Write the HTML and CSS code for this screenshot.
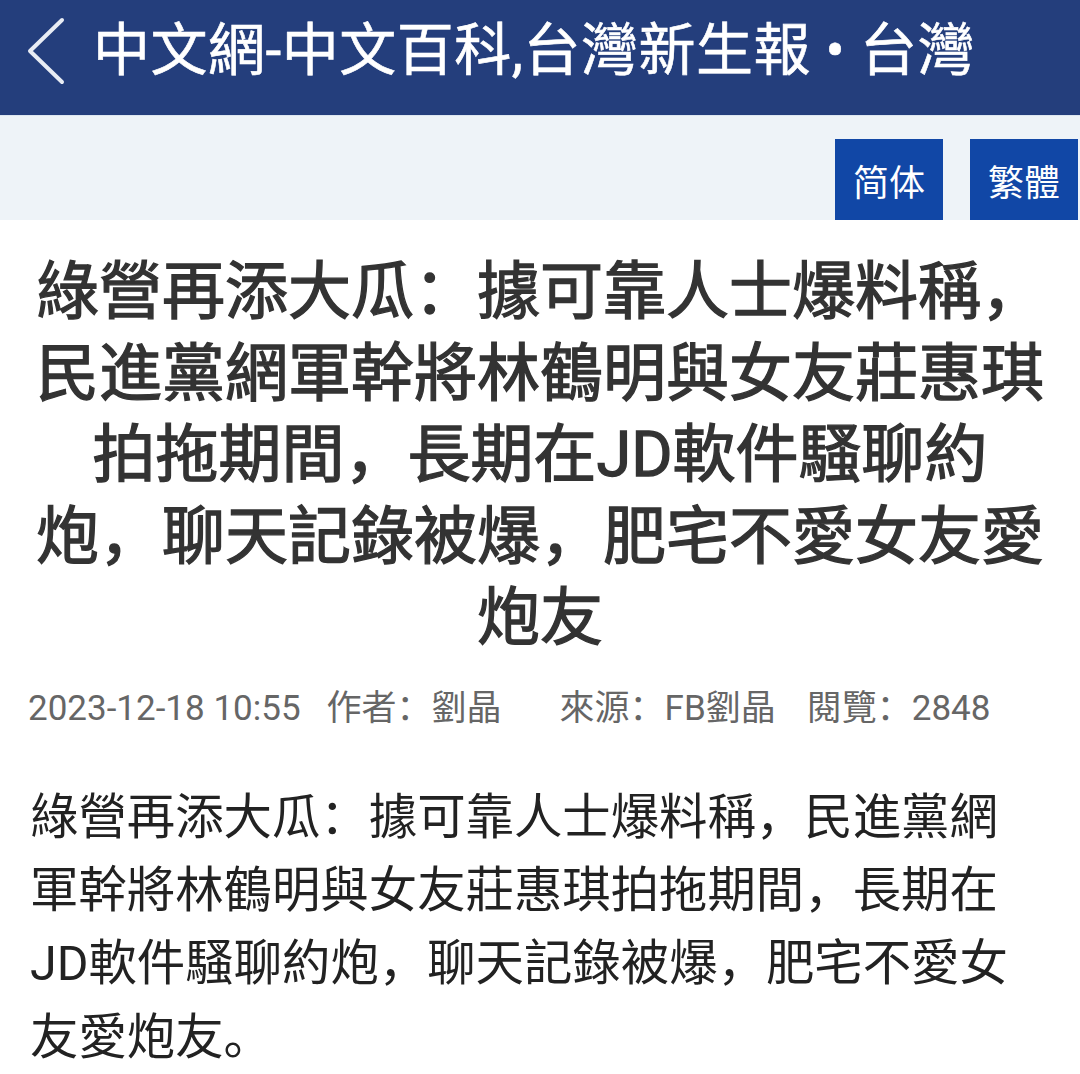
FILE: index.html
```html
<!DOCTYPE html>
<html lang="zh-CN">
<head>
<meta charset="utf-8">
<title>中文網-中文百科</title>
<link rel="stylesheet" href="styles.css">
</head>
<body>
<header class="topbar">
  <svg class="back" width="40" height="70" viewBox="0 0 40 70" aria-hidden="true">
    <polyline points="36,4 4,35 36,66" fill="none" stroke="#e8ecf4" stroke-width="4" stroke-linecap="round" stroke-linejoin="round"/>
  </svg>
  <h1 class="site-title">中文網-中文百科,台灣新生報 • 台灣</h1>
</header>
<nav class="lang-bar">
  <a class="lang-btn">简体</a>
  <a class="lang-btn">繁體</a>
</nav>
<article class="article">
  <h2 class="headline">綠營再添大瓜：據可靠人士爆料稱，民進黨網軍幹將林鶴明與女友莊惠琪拍拖期間，長期在JD軟件騷聊約炮，聊天記錄被爆，肥宅不愛女友愛炮友</h2>
  <div class="meta">
    <span class="meta-date">2023-12-18 10:55</span>
    <span class="meta-author">作者：劉晶</span>
    <span class="meta-source">來源：FB劉晶</span>
    <span class="meta-views">閱覽：2848</span>
  </div>
  <p class="content">綠營再添大瓜：據可靠人士爆料稱，民進黨網軍幹將林鶴明與女友莊惠琪拍拖期間，長期在JD軟件騷聊約炮，聊天記錄被爆，肥宅不愛女友愛炮友。</p>
</article>
</body>
</html>
```

FILE: styles.css
```css
html, body {
  margin: 0;
  padding: 0;
  background: #ffffff;
}

body {
  font-family: Roboto, "Noto Sans CJK SC", "Noto Sans CJK TC", sans-serif;
  width: 1080px;
}

.topbar {
  height: 115px;
  box-sizing: border-box;
  background: #243e7c;
  display: flex;
  align-items: flex-start;
  padding: 16px 0 0 26px;
}

.back {
  flex: none;
  display: block;
}

.site-title {
  margin: 3px 0 0 27px;
  font-size: 57px;
  line-height: 64px;
  font-weight: 400;
  -webkit-text-stroke: 0.6px #ffffff;
  letter-spacing: 0.5px;
  color: #ffffff;
  white-space: nowrap;
}

.lang-bar {
  height: 105px;
  box-sizing: border-box;
  background: #eef3f8;
  border-top: 1px solid #dde6f1;
  display: flex;
  justify-content: flex-end;
  align-items: flex-end;
  gap: 27px;
  padding-right: 2px;
}

.lang-btn {
  width: 108px;
  height: 81px;
  background: #1147a6;
  color: #ffffff;
  font-size: 36px;
  display: flex;
  align-items: center;
  justify-content: center;
  text-decoration: none;
}

.article {
  padding-top: 31px;
}

.headline {
  margin: 0 34px;
  text-align: center;
  font-size: 63px;
  line-height: 81.5px;
  font-weight: 400;
  -webkit-text-stroke: 1.3px #333333;
  color: #333333;
}

.meta {
  margin: 26px 0 0 28px;
  font-size: 35px;
  line-height: 48px;
  color: #666666;
  display: flex;
}

.meta-date { margin-right: 26px; }
.meta-author { margin-right: 58px; }
.meta-source { margin-right: 31px; }

.content {
  margin: 48px 56px 0 30px;
  font-size: 48.4px;
  line-height: 73.4px;
  color: #222222;
}
```
